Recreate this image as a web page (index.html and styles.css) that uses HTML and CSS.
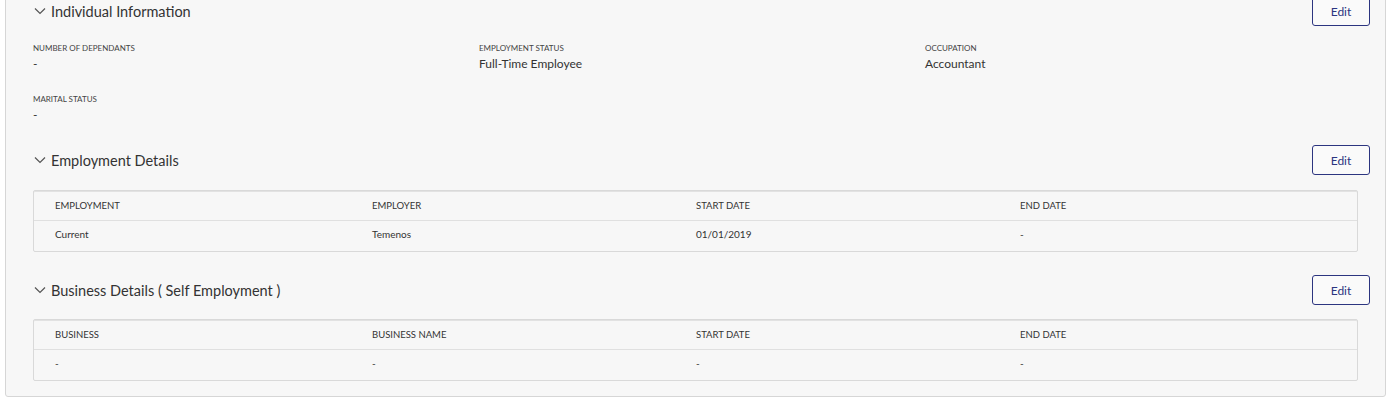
FILE: index.html
```html
<!DOCTYPE html>
<html>
<head>
<meta charset="utf-8">
<link rel="stylesheet" href="styles.css">
</head>
<body>
<div class="card">
  <section class="section">
    <div class="section-head">
      <div class="title"><svg class="chev" width="12" height="8" viewBox="0 0 12 8"><path d="M1 1.5 L6 6.5 L11 1.5" fill="none" stroke="#555" stroke-width="1.2"/></svg>Individual Information</div>
      <button class="edit">Edit</button>
    </div>
    <div class="fields">
      <div class="field"><div class="label">Number of Dependants</div><div class="value">-</div></div>
      <div class="field"><div class="label">Employment Status</div><div class="value">Full-Time Employee</div></div>
      <div class="field"><div class="label">Occupation</div><div class="value">Accountant</div></div>
      <div class="field"><div class="label">Marital Status</div><div class="value">-</div></div>
    </div>
  </section>
  <section class="section">
    <div class="section-head">
      <div class="title"><svg class="chev" width="12" height="8" viewBox="0 0 12 8"><path d="M1 1.5 L6 6.5 L11 1.5" fill="none" stroke="#555" stroke-width="1.2"/></svg>Employment Details</div>
      <button class="edit">Edit</button>
    </div>
    <div class="table">
      <div class="row head"><div>Employment</div><div>Employer</div><div>Start Date</div><div>End Date</div></div>
      <div class="row"><div>Current</div><div>Temenos</div><div>01/01/2019</div><div>-</div></div>
    </div>
  </section>
  <section class="section last">
    <div class="section-head">
      <div class="title"><svg class="chev" width="12" height="8" viewBox="0 0 12 8"><path d="M1 1.5 L6 6.5 L11 1.5" fill="none" stroke="#555" stroke-width="1.2"/></svg>Business Details ( Self Employment )</div>
      <button class="edit">Edit</button>
    </div>
    <div class="table">
      <div class="row head"><div>Business</div><div>Business Name</div><div>Start Date</div><div>End Date</div></div>
      <div class="row"><div>-</div><div>-</div><div>-</div><div>-</div></div>
    </div>
  </section>
</div>
</body>
</html>
```
FILE: styles.css
```css
html, body {
  margin: 0;
  padding: 0;
  background: #ffffff;
  font-family: Lato, "Liberation Sans", sans-serif;
  color: #333;
}
.card {
  margin: -6px 3px 0 5px;
  background: #f7f7f7;
  border: 1px solid #d6d6d6;
  border-radius: 3px;
  padding: 1px 15px 15px 27px;
}
.section-head {
  display: flex;
  justify-content: space-between;
  align-items: center;
  height: 30px;
}
.title {
  display: flex;
  align-items: center;
  font-size: 14.5px;
  color: #333;
}
.chev {
  margin-left: 1px;
  margin-right: 5px;
}
.edit {
  width: 58px;
  height: 30px;
  border: 1px solid #2c3580;
  border-radius: 3px;
  background: #fafafa;
  color: #2c3580;
  font-family: inherit;
  font-size: 12px;
  padding: 0;
}
.fields {
  display: grid;
  grid-template-columns: 446px 446px 1fr;
  row-gap: 22px;
  margin-top: 17px;
  margin-bottom: 22px;
}
.label {
  font-size: 8px;
  line-height: 10px;
  text-transform: uppercase;
  color: #444;
  margin-bottom: 3px;
}
.value {
  font-size: 12px;
  line-height: 16px;
  color: #333;
}
.table {
  margin: 15px 12px 23px 0;
  border: 1px solid #d9d9d9;
  border-radius: 2px;
  background: #f7f7f7;
  box-shadow: inset 0 1px 0 #e2e2e2;
}
.section.last .table {
  margin-top: 14px;
  margin-bottom: 0;
}
.row {
  box-sizing: border-box;
  display: grid;
  grid-template-columns: 317px 324px 324px 1fr;
  padding: 0 0 5px 21px;
  height: 30px;
  align-items: center;
  font-size: 10px;
  color: #333;
}
.row.head {
  padding-bottom: 0;
  height: 30px;
  font-size: 9.5px;
  text-transform: uppercase;
  border-bottom: 1px solid #e0e0e0;
}
```
